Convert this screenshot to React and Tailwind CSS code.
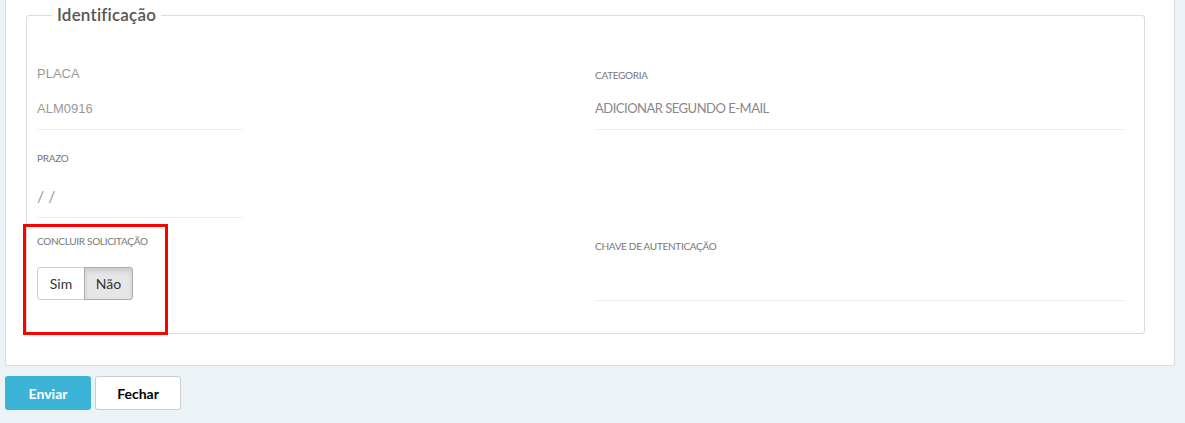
const sans = { fontFamily: 'Lato, "Open Sans", sans-serif' };
const arial = { fontFamily: '"Liberation Sans", Arial, sans-serif' };

function Label({ children, className = '' }) {
  return (
    <div
      className={`text-[10px] leading-[12px] tracking-[-0.3px] text-[#777] uppercase ${className}`}
      style={sans}
    >
      {children}
    </div>
  );
}

function YesNo({ value }) {
  return (
    <div className="inline-flex" style={sans}>
      <button
        className={`h-[33px] w-[48px] text-[14px] text-[#333] border rounded-l-[3px] ${
          value ? 'bg-[#e6e6e6] border-[#adadad] shadow-[inset_0_3px_5px_rgba(0,0,0,0.125)]' : 'bg-white border-[#ccc]'
        }`}
      >
        Sim
      </button>
      <button
        className={`h-[33px] w-[49px] -ml-px text-[14px] text-[#333] border rounded-r-[3px] ${
          !value ? 'bg-[#e6e6e6] border-[#adadad] shadow-[inset_0_3px_5px_rgba(0,0,0,0.125)]' : 'bg-white border-[#ccc]'
        }`}
      >
        Não
      </button>
    </div>
  );
}

export default function App() {
  return (
    <div className="relative w-full h-[423px] bg-[#ecf3f6] overflow-hidden">
      <div className="ml-[5px] w-[1170px] h-[366px] bg-white border border-t-0 border-[#dcdcdc] rounded-b-[3px] pl-[20px] pt-[4px]">
        <fieldset className="w-[1119px] h-[330px] border border-[#dcdcdc] rounded-[3px] px-[10px]">
          <legend
            className="ml-[15px] px-[5px] text-[17px] leading-[22px] font-semibold tracking-[0.2px] text-[#555]"
            style={sans}
          >
            Identificação
          </legend>

          <div className="flex">
            {/* coluna esquerda */}
            <div className="w-[558px]">
              <div className="w-[206px] border-b border-[#eee] pt-[40px] pb-[12px]">
                <div className="text-[13px] leading-[16px] text-[#999]" style={arial}>PLACA</div>
                <div className="mt-[19px] text-[13px] leading-[16px] text-[#999]" style={arial}>ALM0916</div>
              </div>
              <div className="w-[206px] border-b border-[#eee] pt-[22px] pb-[12px]">
                <Label>Prazo</Label>
                <div className="mt-[23px] text-[16px] leading-[18px] text-[#999]" style={sans}>/ /</div>
              </div>
              <div className="pt-[17px]">
                <Label>Concluir Solicitação</Label>
                <div className="mt-[20px]">
                  <YesNo value={false} />
                </div>
              </div>
            </div>

            {/* coluna direita */}
            <div className="w-[530px]">
              <div className="border-b border-[#eee] pt-[43px] pb-[13px]">
                <Label>Categoria</Label>
                <div
                  className="mt-[19px] text-[13px] leading-[16px] tracking-[-0.5px] text-[#888]"
                  style={sans}
                >
                  ADICIONAR SEGUNDO E-MAIL
                </div>
              </div>
              <div className="border-b border-[#eee] pt-[110px] pb-[48px]">
                <Label>Chave de Autenticação</Label>
              </div>
            </div>
          </div>
        </fieldset>
      </div>

      <div className="flex gap-[4px] ml-[5px] mt-[10px]" style={sans}>
        <button className="w-[86px] h-[34px] rounded-[3px] bg-[#3bb4d8] text-white text-[14px] font-bold">
          Enviar
        </button>
        <button className="w-[86px] h-[34px] rounded-[3px] bg-white border border-[#ccc] text-black text-[14px] font-bold">
          Fechar
        </button>
      </div>

      {/* destaque */}
      <div className="absolute left-[23px] top-[224px] w-[145px] h-[111px] border-[3px] border-[#f00] pointer-events-none" />
    </div>
  );
}
